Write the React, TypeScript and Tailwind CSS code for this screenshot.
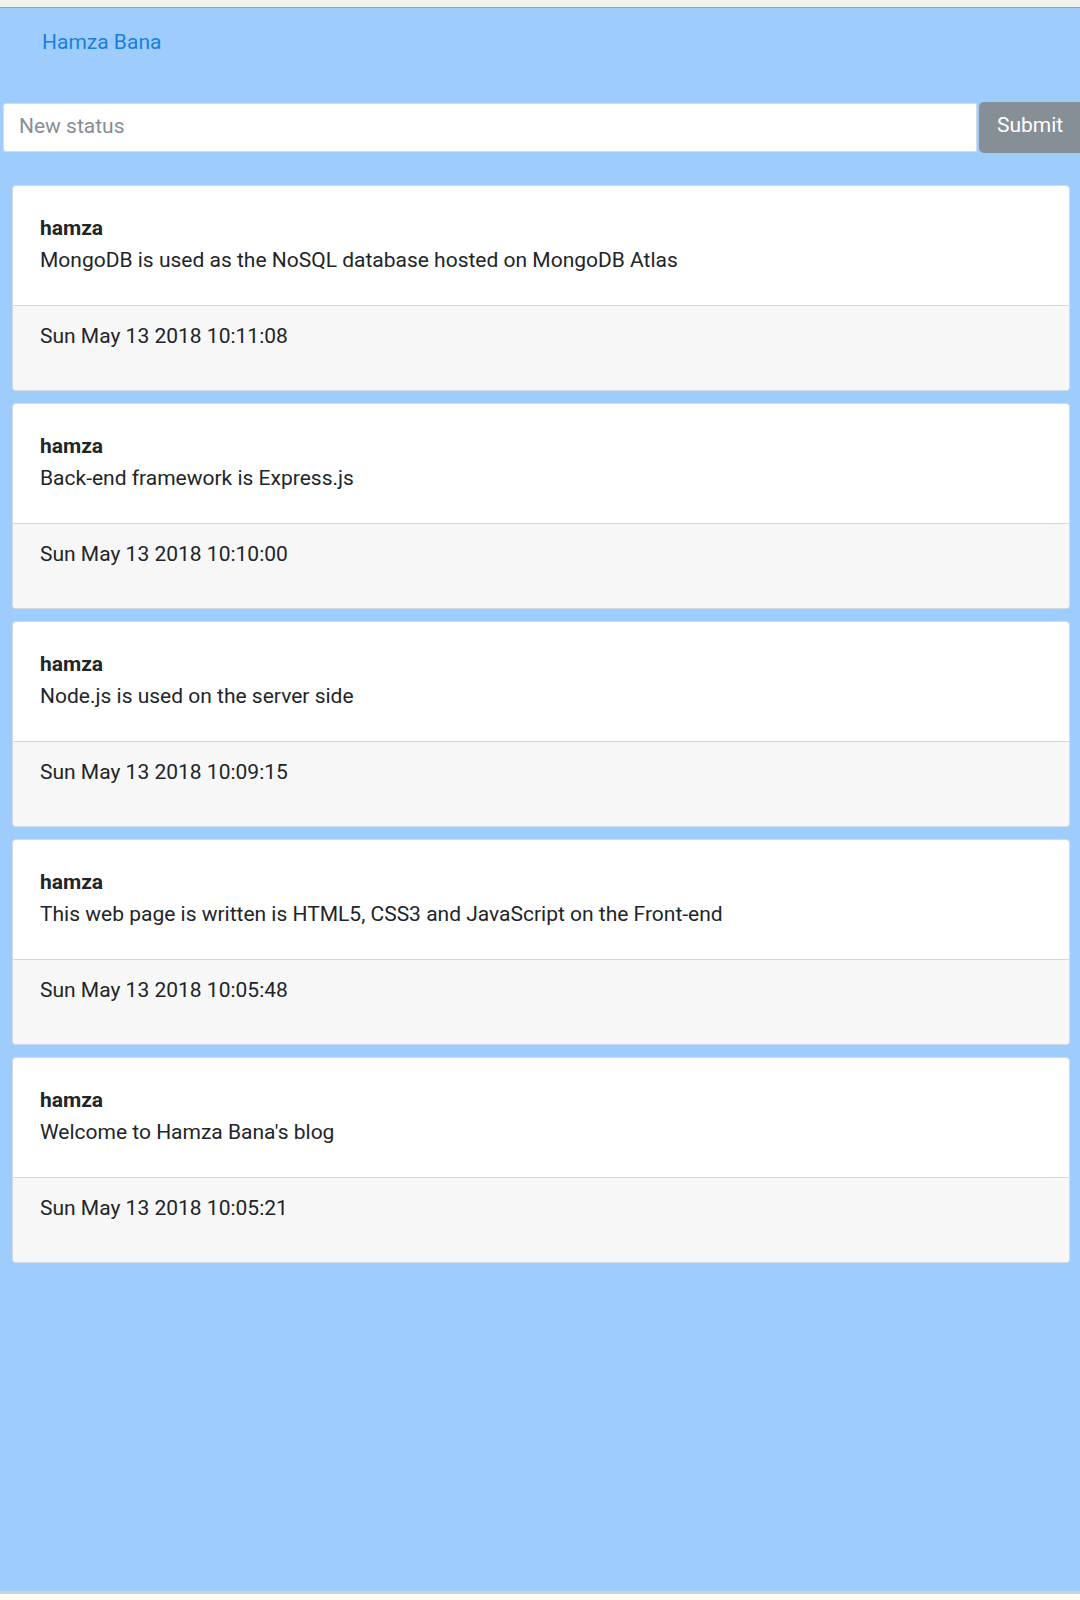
import React from "react";

const posts = [
  { user: "hamza", text: "MongoDB is used as the NoSQL database hosted on MongoDB Atlas", date: "Sun May 13 2018 10:11:08" },
  { user: "hamza", text: "Back-end framework is Express.js", date: "Sun May 13 2018 10:10:00" },
  { user: "hamza", text: "Node.js is used on the server side", date: "Sun May 13 2018 10:09:15" },
  { user: "hamza", text: "This web page is written is HTML5, CSS3 and JavaScript on the Front-end", date: "Sun May 13 2018 10:05:48" },
  { user: "hamza", text: "Welcome to Hamza Bana's blog", date: "Sun May 13 2018 10:05:21" },
];

export default function App() {
  return (
    <div
      className="flex h-[1600px] w-[1080px] flex-col overflow-hidden text-[#212529]"
      style={{ fontFamily: "Roboto, 'Noto Sans', sans-serif" }}
    >
      <div className="h-[8px] shrink-0 border-b border-[#8fa3b3] bg-[#f0f0ee]" />
      <div className="flex flex-1 flex-col bg-[#9ecdfd]">
        <nav className="flex h-[67px] items-center pl-[42px] pt-[1px]">
          <a className="text-[21px] leading-[30px] text-[#1a7fdb]">Hamza Bana</a>
        </nav>
        <div className="mt-[27px] flex items-center">
          <input
            className="ml-[3px] h-[49px] w-[974px] rounded-l-[3px] border border-[#d4dce4] bg-white pb-[3px] pl-[15px] text-[21px] text-[#495057] outline-none placeholder:text-[#868e96]"
            placeholder="New status"
          />
          <button className="ml-[2px] h-[51px] w-[101px] shrink-0 rounded-l-[5px] bg-[#868e96] pb-[3px] pl-[18px] text-left text-[21px] text-white">
            Submit
          </button>
        </div>
        <div className="mt-[32px] flex flex-col gap-[12px] pl-[12px]">
          {posts.map((p, i) => (
            <div
              key={i}
              className="w-[1058px] overflow-hidden rounded-[4px] border border-[#d3dbe2] bg-white"
            >
              <div className="border-b border-[#d6d6d6] px-[27px] pb-[29px] pt-[26px] text-[21px] leading-[32px]">
                <div className="font-bold">{p.user}</div>
                <div>{p.text}</div>
              </div>
              <div className="bg-[#f7f7f7] px-[27px] pb-[38px] pt-[14px] text-[21px] leading-[32px]">
                {p.date}
              </div>
            </div>
          ))}
        </div>
      </div>
      <div className="h-[9px] shrink-0 border-t-[3px] border-[#c9d3da] bg-[#fffef6]" />
    </div>
  );
}
